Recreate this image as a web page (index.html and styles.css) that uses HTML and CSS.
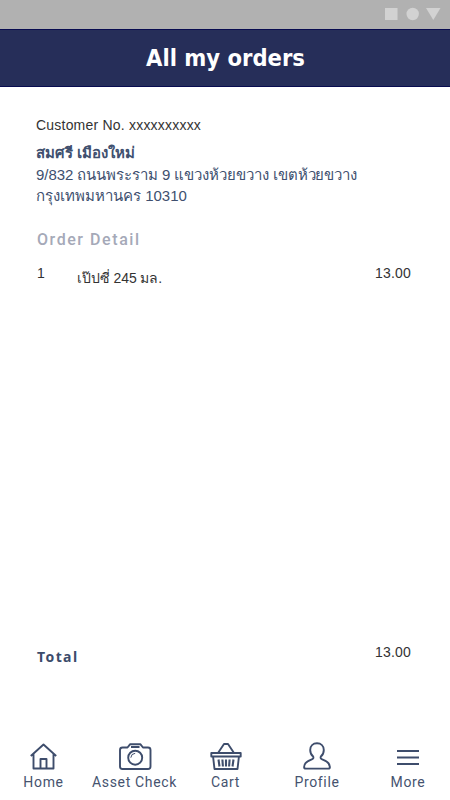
FILE: index.html
```html
<!DOCTYPE html>
<html lang="th">
<head>
<meta charset="utf-8">
<title>All my orders</title>
<link rel="stylesheet" href="styles.css">
</head>
<body>
<div class="screen">
  <div class="status">
    <svg width="58" height="14" viewBox="0 0 58 14"><path d="M0 1h12.500v12H0z"/><circle cx="27.700" cy="7" r="6.200"/><path d="M41 1h14.500l-7.200 12z"/></svg>
  </div>
  <header class="header"><h1>All my orders</h1></header>
  <main class="content">
    <p class="customer">Customer No. xxxxxxxxxx</p>
    <address class="address">
      <strong class="name">สมศรี เมืองใหม่</strong>
      <span class="line line-street">9/832 ถนนพระราม 9 แขวงห้วยขวาง เขตห้วยขวาง</span>
      <span class="line line-city">กรุงเทพมหานคร 10310</span>
    </address>
    <h2 class="section">Order Detail</h2>
    <div class="item">
      <span class="qty">1</span>
      <span class="product">เป๊ปซี่ 245 มล.</span>
      <span class="price">13.00</span>
    </div>
    <div class="total">
      <span class="total-label">Total</span>
      <span class="price">13.00</span>
    </div>
  </main>
  <nav class="nav">
    <a class="tab home"><svg width="28" height="28" viewBox="0 0 28 28"><path d="M.8 14L13.500 2.500 26.200 14M3.500 12v14.500h20V12M10.500 26.500V17h6v9.500"/></svg><span>Home</span></a>
    <a class="tab asset"><svg width="34" height="28" viewBox="0 0 34 28"><path d="M4.500 5.500h5l2.500-3.200h10.500l2.500 3.200h5q2.500 0 2.500 2.500v16.500q0 2.500-2.500 2.500h-25.500q-2.500 0-2.500-2.500v-16.500q0-2.500 2.500-2.500zM13 5h8.500"/><circle cx="17.200" cy="15.700" r="7"/><path class="fine" d="M12.800 15.700q.3-4.100 4.400-4.400"/></svg><span>Asset Check</span></a>
    <a class="tab cart"><svg width="32" height="28" viewBox="0 0 32 28"><path d="M8 11L14 2h4L24 11M1.300 11h29.400v3.500h-29.400zM3 14l1.500 13h23l1.500-13"/><path class="bars" d="M8.500 17.500l1 7M12.400 17.500l.5 7M16 17.500v7M19.600 17.500l-.5 7M23.500 17.500l-1 7"/></svg><span>Cart</span></a>
    <a class="tab profile"><svg width="28" height="28" viewBox="0 0 28 28"><path d="M14 1.300c-4 0-6.800 2.800-6.800 6.700 0 3 1.200 5.200 3 6.600.7 1.600-.5 2.500-2.500 3.300-4 1.500-6.500 3.200-6.600 7 0 1.100.6 1.700 1.700 1.700h22.400c1.100 0 1.700-.6 1.700-1.700-.1-3.800-2.600-5.500-6.600-7-2-.8-3.200-1.700-2.500-3.300 1.800-1.400 3-3.600 3-6.600 0-3.900-2.800-6.700-6.800-6.700z"/></svg><span>Profile</span></a>
    <a class="tab more"><svg width="24" height="28" viewBox="0 0 24 28"><path d="M1 9h22M1 15.500h22M1 22h22"/></svg><span>More</span></a>
  </nav>
</div>
</body>
</html>
```
FILE: styles.css
```css
* { box-sizing: border-box; margin: 0; padding: 0; }
body { background: #fff; font-family: "Liberation Sans", sans-serif; }
.screen { width: 450px; height: 800px; display: flex; flex-direction: column; overflow: hidden; }
.status { height: 29px; background: #b1b1b1; display: flex; justify-content: flex-end; padding: 7px 7px 0 0; }
.status svg { fill: #d2d2d2; }
.header { height: 58px; background: #262e59; border-top: 1px solid #080c50; border-bottom: 1px solid #080c50; display: flex; align-items: center; justify-content: center; }
.header h1 { font: 700 23.500px/32px "DejaVu Sans Condensed", "DejaVu Sans", sans-serif; font-stretch: condensed; letter-spacing: 0; color: #fff; white-space: nowrap; padding-left: 1px; }
.content { flex: 1; padding: 28px 39px 0 36px; display: flex; flex-direction: column; white-space: nowrap; }
.customer { font-size: 14px; line-height: 20px; color: #333; letter-spacing: .21px; }
.address { font-style: normal; color: #40506f; padding-top: 7px; display: flex; flex-direction: column; align-items: flex-start; }
.name, .line { font-size: 15px; line-height: 22px; height: 22px; }
.line-street { letter-spacing: -.06px; }
.line-city { margin-top: -1px; }
.section { font: 500 16px/24px Roboto, sans-serif; letter-spacing: 1.560px; color: #a5a9b8; margin: 21px 0 0 1px; }
.item { display: flex; height: 40px; margin-top: 11px; line-height: 20px; font-size: 14px; color: #333; }
.qty { width: 41px; padding-left: 1px; }
.product { padding-top: 5px; letter-spacing: -.08px; }
.price { margin-left: auto; font-size: 14px; line-height: 20px; color: #333; letter-spacing: .2px; }
.total { display: flex; margin-top: 339px; height: 30px; }
.total-label { font: 700 14px/20px "Noto Sans", sans-serif; letter-spacing: 1.400px; color: #3c4c6b; padding: 5px 0 0 1px; }
.nav { height: 60px; display: flex; padding-top: 2px; }
.tab { width: 91px; display: flex; flex-direction: column; align-items: center; flex: none; font: 400 14px/18px Roboto, sans-serif; letter-spacing: .65px; color: #46536f; gap: 3px; }
.home { margin-left: -2px; }
.profile, .more { padding-left: 1px; }
.tab svg { fill: none; stroke: #3e4d6c; stroke-width: 1.900; stroke-linejoin: round; }
.tab .fine { stroke-width: 1; }
.cart .bars { stroke-width: 2.100; }
```
